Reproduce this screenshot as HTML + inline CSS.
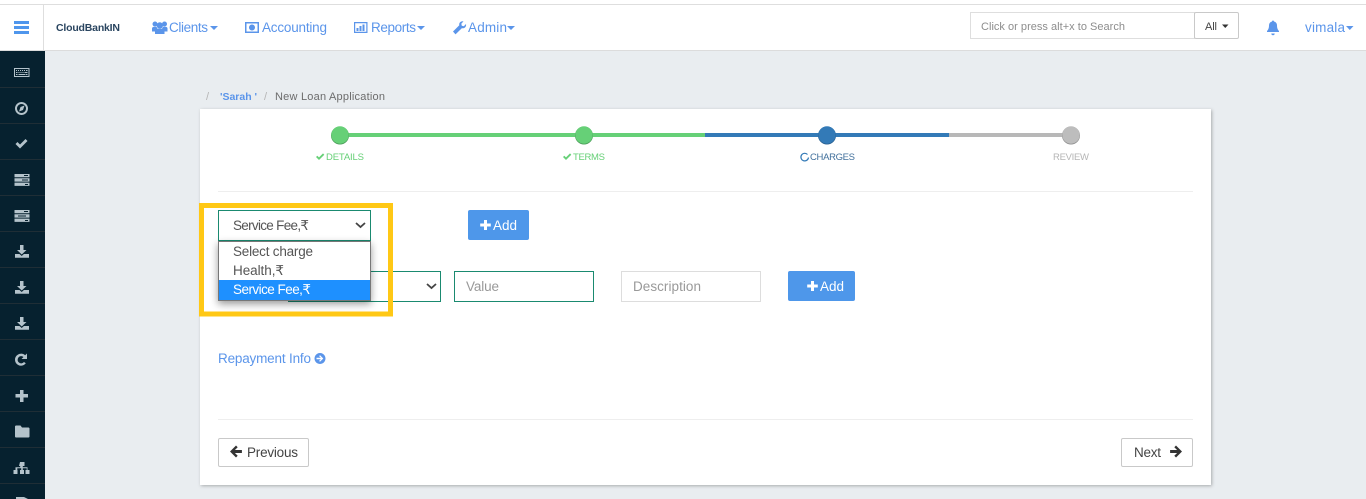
<!DOCTYPE html>
<html lang="en"><head><meta charset="utf-8"><title>New Loan Application</title>
<style>
html,body{margin:0;padding:0;width:1366px;height:499px;overflow:hidden;background:#e9edf0}
svg{display:block}
text{font-family:"Liberation Sans","DejaVu Sans",sans-serif;font-size:13.5px}
.lnk{fill:#5b95ea}
.sb path,.sb rect,.sb circle{fill:#b4c3cb}
.st{font-size:9.5px}
</style></head><body>
<svg width="1366" height="499" viewBox="0 0 1366 499" xmlns="http://www.w3.org/2000/svg">
<defs>
<filter id="cs" x="-3%" y="-3%" width="106%" height="106%"><feDropShadow dx="1" dy="1" stdDeviation="1.5" flood-color="#000" flood-opacity=".28"/></filter>
<filter id="ds" x="-15%" y="-15%" width="130%" height="135%"><feDropShadow dx="0" dy="3" stdDeviation="4" flood-color="#000" flood-opacity=".4"/></filter>
</defs>
<rect width="1366" height="499" fill="#e9edf0"/>
<!-- header -->
<rect width="1366" height="51" fill="#fff"/>
<rect y="4" width="1366" height="1" fill="#dedede"/>
<rect y="50" width="1366" height="1" fill="#dcdcdc"/>
<rect x="43" y="5" width="1" height="45" fill="#dedede"/>
<g fill="#4f96ec"><rect x="14" y="21" width="15" height="3"/><rect x="14" y="26" width="15" height="3"/><rect x="14" y="31" width="15" height="3"/></g>
<text x="56" y="31" font-weight="700" textLength="64" style="font-size:10.5px" fill="#2a4560">CloudBankIN</text>
<g class="lnk">
<g fill="#5b95ea"><circle cx="155" cy="24" r="2.500"/><circle cx="164.500" cy="24" r="2.500"/><circle cx="159.800" cy="25.500" r="3.200"/><path d="M152 31.500v-3c0-1.200 1-1.800 2-1.800h2.500l1 2h4.500l1-2h2.500c1.200 0 2 .7 2 1.800v3h-3V34h-9.500v-2.500z"/></g>
<text x="169" y="32" textLength="39">Clients</text>
<path d="M210 26h8l-4 4z"/>
<path fill-rule="evenodd" d="M245 22h14v11h-14zM246.500 23.500v8h11v-8zM252 24.500a3 3 0 1 1-.01 0z"/>
<text x="262" y="32" textLength="65">Accounting</text>
<path fill-rule="evenodd" d="M354 22h13.500v11H354zM355.200 23.200v8.600h11.100v-8.600z"/><path d="M356.500 28h2v3h-2zM359.500 26h2v5h-2zM362.500 24.500h2V31h-2z"/>
<text x="371" y="32" textLength="45">Reports</text>
<path d="M417 26h8l-4 4z"/>
<path d="M453 31.500l6.300-6.300c-.5-2 1-4 3.200-4l1 .2-2.200 2.300.5 2 2 .5 2.200-2.200c.6 2.800-1.700 4.800-4.200 4.200l-6.300 6.200z"/>
<text x="468" y="32" textLength="39">Admin</text>
<path d="M507 26h8l-4 4z"/>
<path d="M1273 20.500c.7 0 1 .5 1 1 2 .5 3 2 3 4 0 3 1 4.500 2 5.500v1h-12v-1c1-1 2-2.500 2-5.500 0-2 1-3.500 3-4 0-.5.300-1 1-1zM1271.300 33.500h3.400a1.700 1.700 0 0 1-3.400 0z"/>
<text x="1305" y="32" textLength="40">vimala</text>
<path d="M1346 26h7.500l-3.700 4z"/>
</g>
<rect x="970.500" y="12.500" width="224" height="26" fill="#fff" stroke="#dedede"/>
<text x="981" y="30" textLength="144" style="font-size:11px" fill="#8d8d8d">Click or press alt+x to Search</text>
<rect x="1194.500" y="12.500" width="44" height="26" rx="1.500" fill="#fff" stroke="#c9c9c9"/>
<text x="1205" y="30" textLength="12" style="font-size:11px" fill="#444">All</text>
<path d="M1222 24.500h6.500l-3.250 3.500z" fill="#333"/>
<!-- sidebar -->
<rect y="51" width="45" height="448" fill="#06212f"/>
<g fill="#1f2e36"><rect y="87" width="45" height="1"/><rect y="123" width="45" height="1"/><rect y="159" width="45" height="1"/><rect y="195" width="45" height="1"/><rect y="231" width="45" height="1"/><rect y="267" width="45" height="1"/><rect y="303" width="45" height="1"/><rect y="339" width="45" height="1"/><rect y="375" width="45" height="1"/><rect y="411" width="45" height="1"/><rect y="447" width="45" height="1"/><rect y="483" width="45" height="1"/></g>
<g class="sb">
<path fill-rule="evenodd" d="M14 68h15.500v9H14zM15 69v7h13.500v-7z"/>
<path d="M16 70h1v1h-1zM18 70h1v1h-1zM20 70h1v1h-1zM22 70h1v1h-1zM24 70h1v1h-1zM26 70h1.500v1H26zM16 72h1.500v1H16zM18.500 72h1v1h-1zM20.500 72h1v1h-1zM22.500 72h1v1h-1zM24.500 72h3v1h-3zM16 74h1.500v1H16zM18.500 74h7v1h-7zM26 74h1.500v1H26z"/>
<path fill-rule="evenodd" d="M21.500 102a6.500 6.500 0 1 1-.01 0zM21.500 104a4.500 4.500 0 1 0 .01 0zM24.500 105.500l-1.500 4.500-4 1.500 1.500-4.500z"/>
<path d="M15.500 144l2-2 2.500 2.500 5.500-5.500 2 2-7.500 7.500z"/>
<path fill-rule="evenodd" d="M14.500 174h15v3.300h-15zM14.500 178.300h15v3.300h-15zM14.500 182.600h15v3.300h-15zM24 175h4v1h-4zM22 179.500h6v1h-6zM25 184h3v1h-3z"/>
<path fill-rule="evenodd" d="M14.500 210h15v3.300h-15zM14.500 214.300h15v3.300h-15zM14.500 218.600h15v3.300h-15zM24 211h4v1h-4zM18 215.500h8v1h-8zM25 220h3v1h-3z"/>
<path d="M20 245h3.500v5h3l-4.750 4.500-4.750-4.500h3zM15 254h4.500l2.200 2 2.200-2H29v3.800H15z"/>
<path d="M20 281h3.500v5h3l-4.750 4.500-4.750-4.500h3zM15 290h4.500l2.200 2 2.200-2H29v3.800H15z"/>
<path d="M20 317h3.500v5h3l-4.750 4.500-4.750-4.500h3zM15 326h4.500l2.200 2 2.200-2H29v3.800H15z"/>
<path d="M27 353.500v5.500h-5.500l2-2a3.600 3.600 0 1 0 .5 5l1.800 1.300a6 6 0 1 1-.7-8z"/>
<path d="M20 390h3.500v4H28v3.500h-4.500v4.500H20v-4.500h-4.500V394H20z"/>
<path d="M15 426.500c0-.5.500-1 1-1h4.500l1.500 2h6.500c.5 0 1 .5 1 1v8c0 .5-.5 1-1 1H16c-.5 0-1-.5-1-1z"/>
<path d="M19.500 462h4.500v4h-1.700v1.300H27v2.700h2v4h-4v-4h1.200v-1.800h-3.900v1.800h1.200v4h-4v-4h1.200v-1.800h-3.900v1.800H17v4h-4v-4h2v-2.700h4.700V466h-1.200z" transform="translate(.5 0)"/>
<path d="M16 497h8l4 2H16z"/>
</g>
<!-- breadcrumb -->
<text x="206" y="100" style="font-size:11px" fill="#b5b5b5">/</text>
<text x="220" y="100" textLength="37" font-weight="700" style="font-size:10.5px" fill="#5b95ea">'Sarah '</text>
<text x="264" y="100" style="font-size:11px" fill="#b5b5b5">/</text>
<text x="275" y="100" textLength="110" style="font-size:11px" fill="#6c6c6c">New Loan Application</text>
<!-- card -->
<rect x="200" y="109" width="1011" height="376" fill="#fff" filter="url(#cs)"/>
<!-- stepper -->
<rect x="340" y="133" width="365" height="4" fill="#66d077"/>
<rect x="705" y="133" width="244" height="4" fill="#337ab7"/>
<rect x="949" y="133" width="122" height="4" fill="#b8b8b8"/>
<circle cx="340" cy="135.500" r="9" fill="#4a9a58"/><circle cx="340" cy="135" r="8.700" fill="#66d077"/>
<circle cx="584" cy="135.500" r="9" fill="#4a9a58"/><circle cx="584" cy="135" r="8.700" fill="#66d077"/>
<circle cx="827" cy="135.500" r="9" fill="#285e8e"/><circle cx="827" cy="135" r="8.700" fill="#337ab7"/>
<circle cx="1071" cy="135.500" r="9" fill="#8f8f8f"/><circle cx="1071" cy="135" r="8.700" fill="#bdbdbd"/>
<path d="M316 157l1.300-1.300 1.700 1.700 4-4 1.300 1.300-5.300 5.300z" fill="#66d077"/>
<text x="326" y="160" textLength="38" class="st" fill="#66d077">DETAILS</text>
<path d="M563 157l1.300-1.300 1.700 1.700 4-4 1.300 1.300-5.300 5.300z" fill="#66d077"/>
<text x="573" y="160" textLength="32" class="st" fill="#66d077">TERMS</text>
<path d="M807.500 154.500a3.800 3.800 0 1 0 1 3" fill="none" stroke="#337ab7" stroke-width="1.200"/>
<text x="810" y="160" textLength="45" class="st" fill="#41709c">CHARGES</text>
<text x="1053" y="160" textLength="36" class="st" fill="#b5b5b5">REVIEW</text>
<rect x="218" y="191" width="975" height="1" fill="#eee"/>
<!-- second row -->
<rect x="288.500" y="271.500" width="152" height="30" fill="#fff" stroke="#1a8a70"/>
<path d="M427 284l4.500 4 4.500-4" fill="none" stroke="#444" stroke-width="1.800"/>
<rect x="454.500" y="271.500" width="139" height="30" fill="#fff" stroke="#1a8a70"/>
<text x="466" y="291" textLength="33" fill="#999">Value</text>
<rect x="621.500" y="271.500" width="139" height="30" fill="#fff" stroke="#ddd"/>
<text x="633" y="291" textLength="68" fill="#999">Description</text>
<rect x="788" y="271" width="67" height="30" rx="2" fill="#4e97ea"/>
<path d="M811 281h3v3.500h3.800v3H814V291h-3v-3.500h-3.800v-3h3.800z" fill="#fff"/>
<text x="820" y="291" textLength="24" fill="#fff">Add</text>
<!-- first select + add -->
<rect x="218.500" y="210.500" width="152" height="30" fill="#fff" stroke="#1a8a70"/>
<text x="233" y="230" textLength="76" fill="#555">Service Fee,₹</text>
<path d="M356 223l4.500 4 4.500-4" fill="none" stroke="#444" stroke-width="1.800"/>
<rect x="468" y="210" width="61" height="30" rx="2" fill="#4e97ea"/>
<path d="M484 220h3v3.500h3.800v3H487v3.500h-3v-3.500h-3.800v-3h3.800z" fill="#fff"/>
<text x="493" y="230" textLength="24" fill="#fff">Add</text>
<!-- dropdown -->
<rect x="218.500" y="241.500" width="152" height="59" fill="#fff" stroke="#777" filter="url(#ds)"/>
<rect x="219" y="280" width="151" height="20" fill="#1e90ff"/>
<text x="233" y="256" textLength="80" fill="#555">Select charge</text>
<text x="233" y="275" textLength="51" fill="#555">Health,₹</text>
<text x="233" y="294" textLength="78" fill="#fff">Service Fee,₹</text>
<!-- highlight -->
<rect x="201.500" y="205.500" width="189" height="108.500" fill="none" stroke="#ffc815" stroke-width="5"/>
<!-- repayment -->
<text x="218" y="363" textLength="93" class="lnk">Repayment Info</text>
<path fill-rule="evenodd" d="M320 353a5.500 5.500 0 1 1-.01 0zM320 355.200l-.9.9 1.700 1.700h-4.300v1.400h4.300l-1.700 1.700.9.9 3.300-3.300z" fill="#5b95ea"/>
<rect x="218" y="419" width="975" height="1" fill="#eee"/>
<!-- buttons -->
<rect x="218.500" y="438.500" width="90" height="28" rx="1.500" fill="#fff" stroke="#c9c9c9"/>
<path d="M236 446l1.700 1.700-2.800 2.800h7v3h-7l2.800 2.800-1.700 1.700-6-6z" transform="translate(0 -.5)" fill="#333"/>
<text x="247" y="457" textLength="51" fill="#444">Previous</text>
<rect x="1121.500" y="438.500" width="71" height="28" rx="1.500" fill="#fff" stroke="#c9c9c9"/>
<text x="1134" y="457" textLength="27" fill="#444">Next</text>
<path d="M1176 446l-1.700 1.700 2.800 2.800h-7v3h7l-2.800 2.800 1.700 1.700 6-6z" transform="translate(0 -.5)" fill="#333"/>
</svg>
</body></html>
